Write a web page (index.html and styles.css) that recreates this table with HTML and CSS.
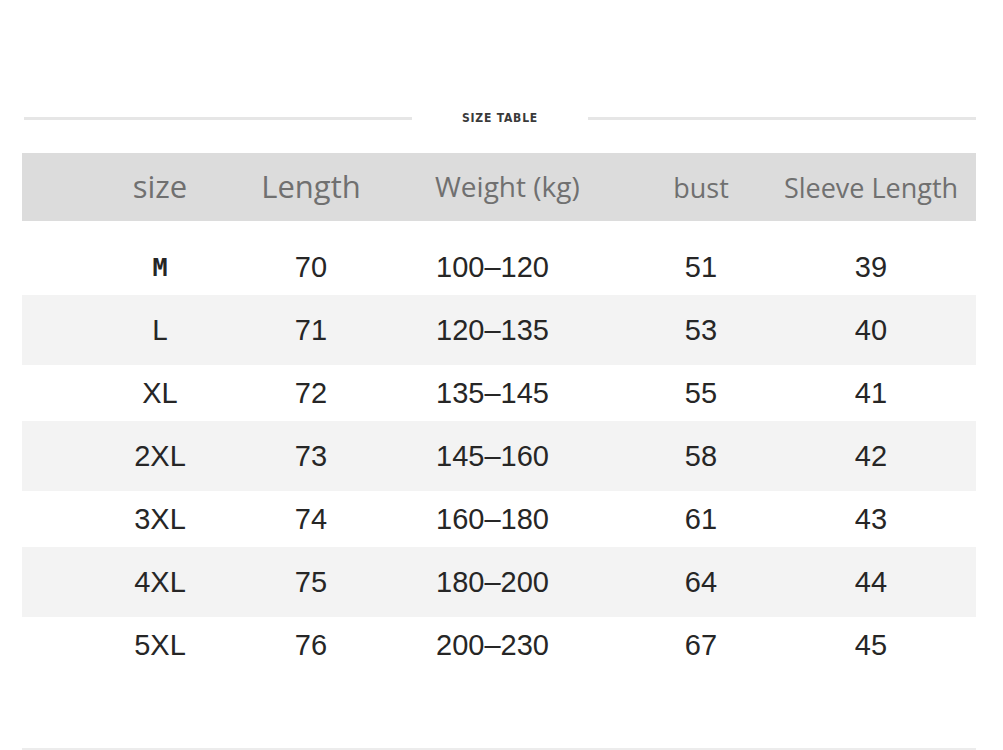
FILE: index.html
```html
<!DOCTYPE html>
<html lang="en">
<head>
<meta charset="utf-8">
<title>Size Table</title>
<link rel="stylesheet" href="styles.css">
</head>
<body>
<main class="sheet">
  <div class="title-row">
    <span class="rule"></span>
    <span class="title">SIZE TABLE</span>
    <span class="rule"></span>
  </div>
  <div class="table">
    <div class="row head">
      <div class="cell big">size</div>
      <div class="cell big">Length</div>
      <div class="cell weight">Weight (kg)</div>
      <div class="cell">bust</div>
      <div class="cell">Sleeve Length</div>
    </div>
    <div class="body">
      <div class="row plain">
        <div class="cell mono strong">M</div><div class="cell">70</div><div class="cell weight">100–120</div><div class="cell">51</div><div class="cell">39</div>
      </div>
      <div class="row stripe">
        <div class="cell mono">L</div><div class="cell">71</div><div class="cell weight">120–135</div><div class="cell">53</div><div class="cell">40</div>
      </div>
      <div class="row plain">
        <div class="cell">XL</div><div class="cell">72</div><div class="cell weight">135–145</div><div class="cell">55</div><div class="cell">41</div>
      </div>
      <div class="row stripe">
        <div class="cell">2XL</div><div class="cell">73</div><div class="cell weight">145–160</div><div class="cell">58</div><div class="cell">42</div>
      </div>
      <div class="row plain">
        <div class="cell">3XL</div><div class="cell">74</div><div class="cell weight">160–180</div><div class="cell">61</div><div class="cell">43</div>
      </div>
      <div class="row stripe">
        <div class="cell">4XL</div><div class="cell">75</div><div class="cell weight">180–200</div><div class="cell">64</div><div class="cell">44</div>
      </div>
      <div class="row plain">
        <div class="cell">5XL</div><div class="cell">76</div><div class="cell weight">200–230</div><div class="cell">67</div><div class="cell">45</div>
      </div>
    </div>
  </div>
  <div class="bottom-rule"></div>
</main>
</body>
</html>
```

FILE: styles.css
```css
html, body {
  margin: 0;
  padding: 0;
  background: #ffffff;
}

.sheet {
  width: 1003px;
  height: 750px;
  box-sizing: border-box;
  padding: 108px 27px 0 22px;
  overflow: hidden;
}

.title-row {
  display: flex;
  align-items: center;
  height: 20px;
  padding-left: 2px;
  gap: 50px;
}

.rule {
  flex: 1;
  height: 3px;
  background: #e6e6e6;
}

.title {
  font-family: "DejaVu Sans Condensed", "Liberation Sans Narrow", "Liberation Sans", sans-serif;
  font-weight: bold;
  font-size: 12px;
  letter-spacing: 0.8px;
  color: #3a3a3a;
  white-space: nowrap;
}

.table {
  margin-top: 25px;
}

.row {
  display: grid;
  grid-template-columns: 140px 162px 208px 202px 138px;
  padding: 0 36px 0 68px;
  align-items: center;
}

.cell {
  display: flex;
  justify-content: center;
  white-space: nowrap;
}

.cell.weight {
  justify-content: flex-start;
  padding-left: 44px;
}

.head {
  height: 68px;
  background: #dcdcdc;
  font-family: "Open Sans", sans-serif;
  font-size: 27px;
  color: #707070;
}

.head .cell.big {
  font-size: 31px;
  margin-top: -2px;
}

.head .cell.weight {
  padding-left: 43px;
  font-size: 28px;
  margin-top: -3px;
}

.body {
  margin-top: 18px;
  font-family: "Liberation Sans", Arial, sans-serif;
  font-size: 29px;
  color: #262626;
}

.plain {
  height: 56px;
}

.stripe {
  height: 70px;
  background: #f3f3f3;
}

.mono {
  font-family: "DejaVu Sans Mono", monospace;
  font-size: 27px;
}

.mono.strong {
  font-weight: bold;
  font-size: 25px;
}

.bottom-rule {
  margin-top: 75px;
  height: 2px;
  background: #ececec;
}
```
